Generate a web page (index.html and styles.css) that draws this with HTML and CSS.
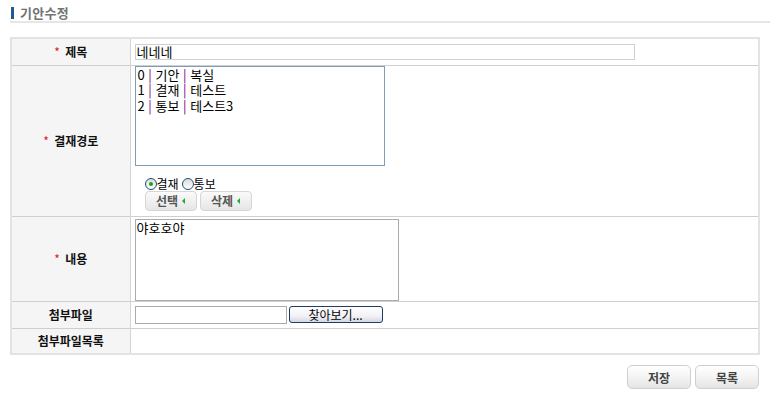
FILE: index.html
```html
<!DOCTYPE html>
<html lang="ko">
<head>
<meta charset="utf-8">
<title>기안수정</title>
<link rel="stylesheet" href="styles.css">
</head>
<body>
<div class="page">
  <div class="page-title"><span class="title-bar"></span><span class="title-text">기안수정</span></div>
  <table class="form">
    <tr class="row-subject">
      <th><span class="req">*</span> 제목</th>
      <td><input class="text-subject" type="text" value="네네네"></td>
    </tr>
    <tr class="row-route">
      <th><span class="req">*</span> 결재경로</th>
      <td>
        <div class="listbox">
          <div class="item">0 <span class="sep">|</span> 기안 <span class="sep">|</span> 복실</div>
          <div class="item">1 <span class="sep">|</span> 결재 <span class="sep">|</span> 테스트</div>
          <div class="item">2 <span class="sep">|</span> 통보 <span class="sep">|</span> 테스트3</div>
        </div>
        <div class="route-controls">
          <div class="radios">
            <label class="radio"><span class="radio-dot checked"></span>결재</label>
            <label class="radio"><span class="radio-dot"></span>통보</label>
          </div>
          <div class="small-btns">
            <button class="sbtn">선택 <span class="tri"></span></button>
            <button class="sbtn">삭제 <span class="tri"></span></button>
          </div>
        </div>
      </td>
    </tr>
    <tr class="row-content">
      <th><span class="req">*</span> 내용</th>
      <td><div class="textarea">야호호야</div></td>
    </tr>
    <tr class="row-file">
      <th>첨부파일</th>
      <td>
        <div class="file-line">
          <span class="file-box"></span>
          <button class="browse">찾아보기...</button>
        </div>
      </td>
    </tr>
    <tr class="row-list">
      <th>첨부파일목록</th>
      <td></td>
    </tr>
  </table>
  <div class="actions">
    <button class="btn">저장</button>
    <button class="btn">목록</button>
  </div>
</div>
</body>
</html>
```
FILE: styles.css
```css
* { box-sizing: border-box; }
body {
  margin: 0;
  background: #fff;
  font-family: "Noto Sans CJK KR", "Noto Sans", sans-serif;
  font-size: 12px;
  color: #000;
}
.page {
  padding: 0 0 0 10px;
  width: 770px;
}
.page-title {
  display: flex;
  align-items: center;
  height: 23px;
  padding-top: 4px;
  border-bottom: 2px solid #e6e6e6;
}
.title-bar {
  width: 3px;
  height: 12px;
  background: #1d5b91;
  margin-left: 1px;
  margin-right: 6px;
}
.title-text {
  font-size: 13px;
  color: #737373;
  font-weight: bold;
  line-height: 13px;
  letter-spacing: 0.3px;
}
.form {
  margin-top: 14px;
  width: 750px;
  border-collapse: collapse;
  border: 2px solid #e3e3e3;
}
.form th, .form td {
  border-top: 1px solid #cfcfcf;
  padding: 0;
}
.form th {
  width: 119px;
  background: #f5f5f5;
  border-right: 1px solid #d4d4d4;
  font-size: 12px;
  font-weight: bold;
  text-align: center;
  color: #111;
}
.form td { padding-left: 4px; vertical-align: middle; }
.req { color: #e02020; font-weight: normal; margin-right: 2px; }
.row-subject { height: 27px; }
.row-route { height: 151px; }
.row-content { height: 84px; }
.row-file { height: 27px; }
.row-list { height: 26px; }
.text-subject {
  display: block;
  width: 500px;
  height: 16px;
  border: 1px solid #cfcfcf;
  padding: 0 1px;
  font-family: "Noto Sans CJK KR", sans-serif;
  font-size: 13px;
  line-height: 14px;
  color: #000;
}
.row-route td { vertical-align: top; }
.listbox {
  width: 250px;
  height: 100px;
  border: 1px solid #7f9db9;
  padding: 0 2px;
  font-size: 13px;
  line-height: 15.5px;
}
.item { height: 15.5px; }
.sep { color: #800080; }
.route-controls {
  padding-left: 10px;
  padding-top: 11px;
}
.radios {
  display: flex;
  align-items: center;
  height: 14px;
  font-size: 12px;
}
.radio { display: flex; align-items: center; margin-right: 3px; }
.radio-dot {
  width: 12px;
  height: 12px;
  border-radius: 50%;
  border: 1px solid #1c5180;
  background: linear-gradient(#dcdcd6, #fff);
  position: relative;
}
.radio-dot.checked::after {
  content: "";
  position: absolute;
  left: 3px;
  top: 3px;
  width: 4px;
  height: 4px;
  border-radius: 50%;
  background: #21a121;
}
.small-btns { display: flex; gap: 3px; }
.sbtn {
  width: 52px;
  height: 20px;
  border: 1px solid #d6d6d6;
  border-radius: 4px;
  background: linear-gradient(#fafafa, #e6e6e6);
  font-family: "Noto Sans CJK KR", sans-serif;
  font-size: 12px;
  font-weight: bold;
  color: #555;
  padding: 0;
  display: flex;
  align-items: center;
  justify-content: center;
  gap: 4px;
}
.tri {
  width: 0;
  height: 0;
  border-top: 3px solid transparent;
  border-bottom: 3px solid transparent;
  border-right: 3px solid #1caa3c;
}
.row-content td { vertical-align: top; padding-top: 2px; }
.textarea {
  width: 264px;
  height: 82px;
  border: 1px solid #a5acb2;
  padding: 0 1px;
  font-size: 13px;
  line-height: 15px;
}
.file-line { display: flex; align-items: center; }
.file-box {
  width: 152px;
  height: 18px;
  border: 1px solid #a5acb2;
  margin-right: 2px;
}
.browse {
  width: 94px;
  height: 17px;
  border: 1px solid #1e3d66;
  border-radius: 3px;
  background: linear-gradient(#ffffff 0%, #f2f2f6 60%, #d6d6e4 100%);
  font-family: "Noto Sans CJK KR", sans-serif;
  font-size: 12px;
  line-height: 13px;
  color: #000;
  padding: 0;
}
.actions {
  width: 750px;
  display: flex;
  justify-content: flex-end;
  gap: 4px;
  margin-top: 10px;
  padding-right: 1px;
}
.btn {
  width: 64px;
  height: 24px;
  border: 1px solid #cfcfcf;
  border-radius: 5px;
  background: linear-gradient(#ffffff, #f4f4f4 50%, #e4e4e4);
  font-family: "Noto Sans CJK KR", sans-serif;
  font-size: 12px;
  font-weight: bold;
  color: #444;
  padding: 0;
}
```
